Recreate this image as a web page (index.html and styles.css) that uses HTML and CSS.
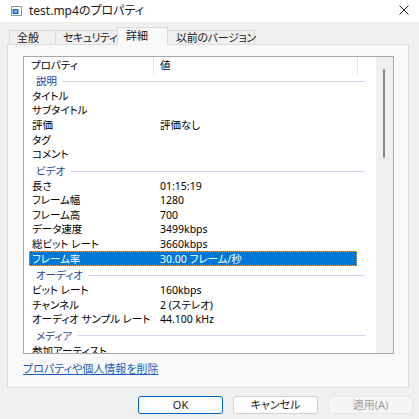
FILE: index.html
```html
<!DOCTYPE html>
<html lang="ja">
<head>
<meta charset="utf-8">
<title>test.mp4のプロパティ</title>
<link rel="stylesheet" href="styles.css">
</head>
<body>
<div class="window">
  <div class="titlebar">
    <svg class="app-icon" width="11" height="10" viewBox="0 0 11 10">
      <rect x="0.5" y="0.5" width="10" height="9" fill="#ffffff" stroke="#8c98a6"/>
      <rect x="1.5" y="3" width="6" height="5" fill="#1f6fc5"/>
      <rect x="3" y="4.5" width="3" height="2" fill="#8cc4f2"/>
    </svg>
    <span class="title">test.mp4のプロパティ</span>
    <svg class="close" width="10" height="10" viewBox="0 0 10 10">
      <path d="M0.5 0.5 L9.5 9.5 M9.5 0.5 L0.5 9.5" stroke="#222" stroke-width="1" fill="none"/>
    </svg>
  </div>
  <div class="content">
    <div class="tabs">
      <div class="tab tab-general">全般</div>
      <div class="tab tab-security">セキュリティ</div>
      <div class="tab tab-active">詳細</div>
      <div class="tab tab-versions">以前のバージョン</div>
    </div>
    <div class="panel">
      <div class="list">
        <div class="list-main">
          <div class="list-header">
            <div class="hcol hcol-name">プロパティ</div>
            <div class="hcol hcol-value">値</div>
          </div>
          <div class="rows">
            <div class="group group-first"><span class="group-label">説明</span><span class="group-line"></span></div>
            <div class="row"><span class="name">タイトル</span><span class="value"></span></div>
            <div class="row"><span class="name">サブタイトル</span><span class="value"></span></div>
            <div class="row"><span class="name">評価</span><span class="value">評価なし</span></div>
            <div class="row"><span class="name">タグ</span><span class="value"></span></div>
            <div class="row"><span class="name">コメント</span><span class="value"></span></div>
            <div class="group"><span class="group-label">ビデオ</span><span class="group-line"></span></div>
            <div class="row"><span class="name">長さ</span><span class="value">01:15:19</span></div>
            <div class="row"><span class="name">フレーム幅</span><span class="value">1280</span></div>
            <div class="row"><span class="name">フレーム高</span><span class="value">700</span></div>
            <div class="row"><span class="name">データ速度</span><span class="value">3499kbps</span></div>
            <div class="row"><span class="name">総ビット レート</span><span class="value">3660kbps</span></div>
            <div class="row row-selected"><span class="name">フレーム率</span><span class="value">30.00 フレーム/秒</span></div>
            <div class="group"><span class="group-label">オーディオ</span><span class="group-line"></span></div>
            <div class="row"><span class="name">ビット レート</span><span class="value">160kbps</span></div>
            <div class="row"><span class="name">チャンネル</span><span class="value">2 (ステレオ)</span></div>
            <div class="row"><span class="name">オーディオ サンプル レート</span><span class="value">44.100 kHz</span></div>
            <div class="group"><span class="group-label">メディア</span><span class="group-line"></span></div>
            <div class="row"><span class="name">参加アーティスト</span><span class="value"></span></div>
          </div>
        </div>
        <div class="scrollbar"><div class="thumb"></div></div>
      </div>
      <div class="link-row"><a class="link" href="#">プロパティや個人情報を削除</a></div>
    </div>
    <div class="buttons">
      <button class="btn btn-default">OK</button>
      <button class="btn">キャンセル</button>
      <button class="btn btn-disabled">適用(A)</button>
    </div>
  </div>
</div>
</body>
</html>
```

FILE: styles.css
```css
html, body {
  margin: 0;
  padding: 0;
}

body {
  font-family: "Noto Sans", "Noto Sans CJK JP", sans-serif;
  font-size: 11px;
  font-feature-settings: "palt";
  color: #000;
  background: #f0f0f0;
}

.window {
  width: 419px;
  height: 419px;
  background: #f0f0f0;
  overflow: hidden;
}

.titlebar {
  height: 22px;
  background: #ffffff;
  display: flex;
  align-items: center;
  padding-left: 11px;
  box-sizing: border-box;
}

.app-icon {
  display: block;
  margin-top: -1px;
}

.title {
  margin-left: 7px;
  font-size: 12px;
  line-height: 14px;
  color: #1a1a1a;
}

.close {
  display: block;
  margin-left: auto;
  margin-right: 10px;
  margin-top: -2px;
}

.content {
  padding: 5px 8px 0 7px;
}

.tabs {
  display: flex;
  align-items: flex-end;
  height: 17px;
  padding-left: 2px;
  position: relative;
  z-index: 1;
}

.tab {
  height: 14px;
  box-sizing: border-box;
  padding: 0 0 0 8px;
  font-size: 11px;
  line-height: 13px;
  color: #1a1a1a;
  background: #f0f0f0;
  border: 1px solid #d9d9d9;
  border-bottom: none;
  border-left: none;
  white-space: nowrap;
}

.tab-general {
  width: 47px;
  border-left: 1px solid #d9d9d9;
  padding-left: 7px;
}

.tab-security {
  width: 62px;
  padding-left: 7px;
  letter-spacing: -0.5px;
}

.tab-versions {
  width: 87px;
  letter-spacing: -0.3px;
}

.tab-active {
  width: 51px;
  height: 18px;
  margin-bottom: -1px;
  margin-left: -1px;
  padding-top: 1px;
  background: #f9f9f9;
  border-left: 1px solid #d9d9d9;
  position: relative;
  z-index: 2;
}

.panel {
  width: 402px;
  height: 344px;
  box-sizing: border-box;
  background: #f9f9f9;
  border: 1px solid #dcdcdc;
  padding: 11px 15px 0 15px;
}

.list {
  width: 371px;
  height: 298px;
  box-sizing: border-box;
  border: 1px solid #a8a8a8;
  background: #ffffff;
  display: flex;
  font-size: 10.5px;
}

.list-main {
  width: 352px;
  overflow: hidden;
}

.list-header {
  height: 17px;
  display: flex;
  line-height: 16px;
}

.hcol {
  box-sizing: border-box;
  border-right: 1px solid #e3e3e3;
}

.hcol-name {
  width: 130px;
  padding-left: 7px;
}

.hcol-value {
  width: 204px;
  padding-left: 6px;
}

.rows {
  height: 279px;
  overflow: hidden;
}

.group {
  height: 14.6px;
  margin-top: 2.2px;
  display: flex;
  align-items: center;
  padding-left: 12px;
  margin-right: 11px;
}

.group-first {
  margin-top: 0;
}

.group-label {
  color: #2b449c;
  line-height: 14px;
}

.group-line {
  flex: 1;
  height: 1px;
  background: #cfd9ee;
  margin-left: 5px;
}

.row {
  height: 14.6px;
  width: 328px;
  margin-left: 5px;
  box-sizing: border-box;
  display: grid;
  grid-template-columns: 131px 1fr;
  align-items: center;
  line-height: 14px;
  white-space: nowrap;
}

.name {
  padding-left: 3px;
  overflow: hidden;
}

.row-selected {
  background: #0078d7;
  color: #ffffff;
  outline: 1px dotted #d9a860;
  outline-offset: -1px;
}

.scrollbar {
  width: 17px;
  background: #efefef;
}

.thumb {
  width: 2px;
  height: 89px;
  margin-top: 12px;
  margin-left: 7px;
  background: #8a8a8a;
  border-radius: 1px;
}

.link-row {
  margin-top: 7px;
  height: 16px;
  line-height: 16px;
}

.link {
  color: #1a5fb4;
  text-decoration: underline;
  font-size: 11px;
}

.buttons {
  display: flex;
  justify-content: flex-end;
  gap: 10px;
  margin-top: 8px;
  margin-right: -2px;
}

.btn {
  width: 85px;
  height: 18px;
  box-sizing: border-box;
  padding: 0;
  font-family: inherit;
  font-size: 11px;
  font-feature-settings: "palt";
  line-height: 14px;
  color: #1a1a1a;
  background: #fdfdfd;
  border: 1px solid #d0d0d0;
  border-radius: 3px;
}

.btn-default {
  border-color: #0067c0;
}

.btn-disabled {
  background: #f5f5f5;
  border-color: #e8e8e8;
  color: #a0a0a0;
}
```
